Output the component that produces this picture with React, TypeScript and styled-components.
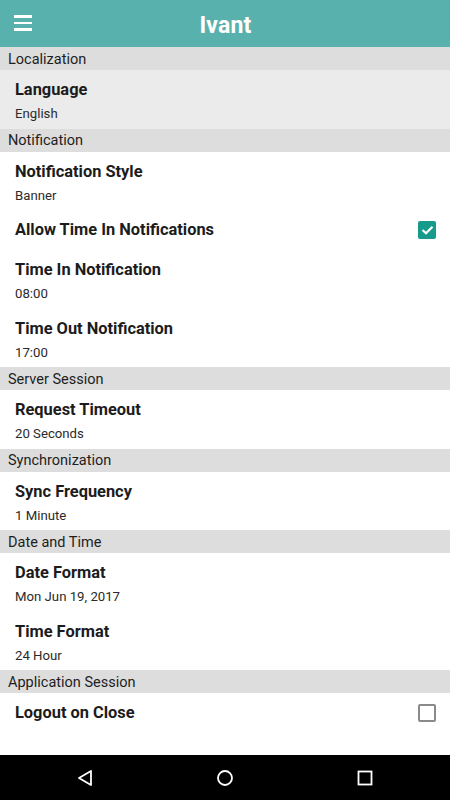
import React from 'react';
import styled, { createGlobalStyle } from 'styled-components';

const GlobalStyle = createGlobalStyle`
  html, body {
    margin: 0;
    padding: 0;
    background: #fff;
    font-family: Roboto, "Liberation Sans", sans-serif;
  }
`;

const Screen = styled.div`
  display: flex;
  flex-direction: column;
  width: 450px;
  height: 800px;
  background: #fff;
  overflow: hidden;
`;

const AppBar = styled.header`
  display: flex;
  align-items: center;
  justify-content: center;
  position: relative;
  height: 47px;
  flex-shrink: 0;
  box-sizing: border-box;
  padding-top: 3px;
  background: #59b1ad;
`;

const MenuButton = styled.div`
  position: absolute;
  left: 14px;
  top: 15px;
  display: flex;
  flex-direction: column;
  gap: 4px;
  width: 18px;
`;

const MenuLine = styled.span`
  display: block;
  height: 2.5px;
  background: #fff;
`;

const Title = styled.h1`
  margin: 0 0 0 1px;
  color: #fff;
  font-size: 23px;
  font-weight: 700;
  letter-spacing: 0.2px;
`;

const List = styled.main`
  flex: 1;
  display: flex;
  flex-direction: column;
`;

const SectionHeader = styled.div`
  display: flex;
  align-items: center;
  height: 23px;
  padding: 1px 0 0 8px;
  box-sizing: border-box;
  background: #dddddd;
  color: #1e1e1e;
  font-size: 14.5px;
`;

const Item = styled.div<{ $highlight?: boolean; $compact?: boolean }>`
  display: flex;
  align-items: flex-start;
  justify-content: space-between;
  height: ${p => (p.$compact ? '40px' : '58.5px')};
  box-sizing: border-box;
  padding: 10px 14px 0 15px;
  background: ${p => (p.$highlight ? '#ebebeb' : '#fff')};
`;

const ItemText = styled.div`
  display: flex;
  flex-direction: column;
`;

const ItemTitle = styled.div`
  color: #1c1c1c;
  font-size: 16.4px;
  font-weight: 700;
  line-height: 19px;
`;

const ItemValue = styled.div`
  margin-top: 7px;
  color: #2a2a2a;
  font-size: 13.2px;
  line-height: 16px;
`;

const Check = styled.div<{ $checked?: boolean }>`
  display: flex;
  align-items: center;
  justify-content: center;
  width: 18px;
  height: 18px;
  margin-top: 1px;
  box-sizing: border-box;
  border-radius: 2px;
  background: ${p => (p.$checked ? '#159a8c' : 'transparent')};
  border: ${p => (p.$checked ? 'none' : '2px solid #8a8a8a')};
`;

const NavBar = styled.nav`
  display: flex;
  align-items: center;
  justify-content: center;
  gap: 110px;
  height: 45px;
  flex-shrink: 0;
  background: #000;
`;

const NavButton = styled.div`
  display: flex;
  align-items: center;
  justify-content: center;
  width: 30px;
  height: 30px;
`;

type Row = { title: string; value?: string; check?: boolean; checked?: boolean; highlight?: boolean };
type Section = { name: string; rows: Row[] };

const sections: Section[] = [
  { name: 'Localization', rows: [{ title: 'Language', value: 'English', highlight: true }] },
  {
    name: 'Notification',
    rows: [
      { title: 'Notification Style', value: 'Banner' },
      { title: 'Allow Time In Notifications', check: true, checked: true },
      { title: 'Time In Notification', value: '08:00' },
      { title: 'Time Out Notification', value: '17:00' },
    ],
  },
  { name: 'Server Session', rows: [{ title: 'Request Timeout', value: '20 Seconds' }] },
  { name: 'Synchronization', rows: [{ title: 'Sync Frequency', value: '1 Minute' }] },
  {
    name: 'Date and Time',
    rows: [
      { title: 'Date Format', value: 'Mon Jun 19, 2017' },
      { title: 'Time Format', value: '24 Hour' },
    ],
  },
  { name: 'Application Session', rows: [{ title: 'Logout on Close', check: true }] },
];

export default function App() {
  return (
    <Screen>
      <GlobalStyle />
      <AppBar>
        <MenuButton>
          <MenuLine />
          <MenuLine />
          <MenuLine />
        </MenuButton>
        <Title>Ivant</Title>
      </AppBar>
      <List>
        {sections.map(s => (
          <React.Fragment key={s.name}>
            <SectionHeader>{s.name}</SectionHeader>
            {s.rows.map(r => (
              <Item key={r.title} $highlight={r.highlight} $compact={r.check}>
                <ItemText>
                  <ItemTitle>{r.title}</ItemTitle>
                  {r.value && <ItemValue>{r.value}</ItemValue>}
                </ItemText>
                {r.check && (
                  <Check $checked={r.checked}>
                    {r.checked && (
                      <svg width="13" height="10" viewBox="0 0 13 10">
                        <path d="M1.5 5 L5 8.3 L11.5 1.7" fill="none" stroke="#fff" strokeWidth="2.2" />
                      </svg>
                    )}
                  </Check>
                )}
              </Item>
            ))}
          </React.Fragment>
        ))}
      </List>
      <NavBar>
        <NavButton>
          <svg width="18" height="18" viewBox="0 0 18 18">
            <path d="M15 2 L3 9 L15 16 Z" fill="none" stroke="#fff" strokeWidth="1.8" strokeLinejoin="round" />
          </svg>
        </NavButton>
        <NavButton>
          <svg width="18" height="18" viewBox="0 0 18 18">
            <circle cx="9" cy="9" r="7" fill="none" stroke="#fff" strokeWidth="1.8" />
          </svg>
        </NavButton>
        <NavButton>
          <svg width="16" height="16" viewBox="0 0 16 16">
            <rect x="1.5" y="1.5" width="13" height="13" fill="none" stroke="#fff" strokeWidth="1.8" />
          </svg>
        </NavButton>
      </NavBar>
    </Screen>
  );
}
